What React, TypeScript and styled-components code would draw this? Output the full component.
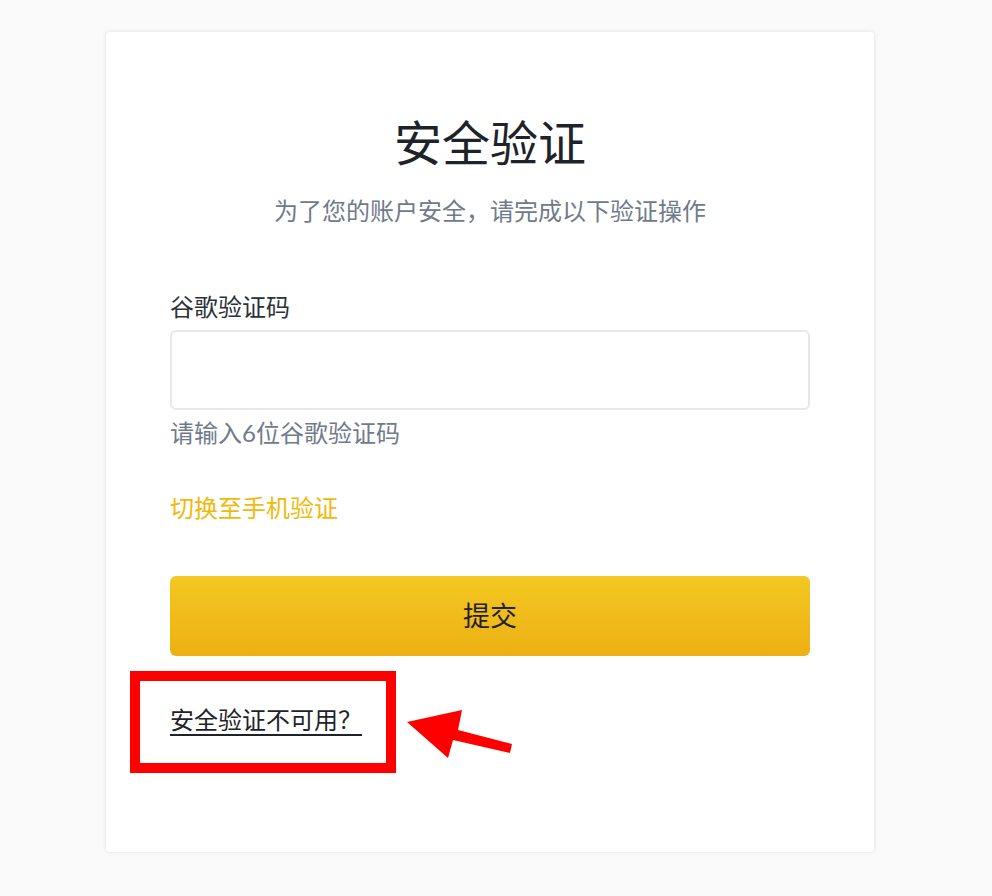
import React from "react";
import styled, { createGlobalStyle } from "styled-components";

const GlobalStyle = createGlobalStyle`
  html, body {
    margin: 0;
    padding: 0;
    background: #fafafa;
    font-family: Lato, "Noto Sans CJK SC", sans-serif;
  }
  * { box-sizing: border-box; }
`;

const Page = styled.div`
  padding: 32px 0 44px 106px;
`;

const Card = styled.div`
  width: 768px;
  height: 820px;
  background: #ffffff;
  border-radius: 4px;
  box-shadow: 0 0 4px rgba(0, 0, 0, 0.12);
  padding: 79px 64px 0;
  display: flex;
  flex-direction: column;
`;

const Title = styled.h1`
  margin: 0;
  text-align: center;
  font-size: 48px;
  line-height: 64px;
  font-weight: 400;
  color: #1e2329;
`;

const Subtitle = styled.p`
  margin: 20px 0 0;
  text-align: center;
  font-size: 24px;
  line-height: 32px;
  color: #707a8a;
`;

const Label = styled.label`
  margin-top: 64px;
  font-size: 24px;
  line-height: 32px;
  color: #2b3139;
`;

const Input = styled.input`
  margin-top: 7px;
  width: 640px;
  height: 80px;
  border: 2px solid #e6e8ea;
  border-radius: 6px;
  outline: none;
  padding: 0 20px;
  font-size: 24px;
  background: #fff;
`;

const Helper = styled.div`
  margin-top: 7px;
  font-size: 24px;
  line-height: 32px;
  color: #707a8a;
`;

const SwitchLink = styled.a`
  margin-top: 43px;
  font-size: 24px;
  line-height: 32px;
  color: #f0b90b;
  text-decoration: none;
  align-self: flex-start;
  cursor: pointer;
`;

const SubmitButton = styled.button`
  margin-top: 52px;
  width: 640px;
  height: 80px;
  border: none;
  border-radius: 6px;
  background: linear-gradient(180deg, #f4c823 0%, #ecb013 100%);
  color: #1e2329;
  font-family: inherit;
  font-size: 27px;
  padding: 0 0 3px;
  cursor: pointer;
`;

const HelpRow = styled.div`
  position: relative;
  margin-top: 48px;
  height: 32px;
`;

const HelpLink = styled.a`
  font-size: 24px;
  line-height: 32px;
  color: #1e2329;
  text-decoration: underline;
  text-underline-offset: 5px;
  text-decoration-thickness: 2px;
  cursor: pointer;
`;

const Highlight = styled.div`
  position: absolute;
  left: -40px;
  top: -33px;
  width: 266px;
  height: 102px;
  border: 10px solid #ff0000;
  pointer-events: none;
`;

const Arrow = styled.svg`
  position: absolute;
  left: 230px;
  top: -4px;
  width: 120px;
  height: 65px;
  pointer-events: none;
`;

export default function App() {
  return (
    <>
      <GlobalStyle />
      <Page>
        <Card>
          <Title>安全验证</Title>
          <Subtitle>为了您的账户安全，请完成以下验证操作</Subtitle>
          <Label htmlFor="gcode">谷歌验证码</Label>
          <Input id="gcode" type="text" />
          <Helper>请输入6位谷歌验证码</Helper>
          <SwitchLink>切换至手机验证</SwitchLink>
          <SubmitButton>提交</SubmitButton>
          <HelpRow>
            <HelpLink>安全验证不可用？</HelpLink>
            <Highlight />
            <Arrow viewBox="0 0 120 65">
              <polygon
                points="7,22 62,10 58,30 112,44 110,53 53,40 48,58"
                fill="#ff0000"
              />
            </Arrow>
          </HelpRow>
        </Card>
      </Page>
    </>
  );
}
